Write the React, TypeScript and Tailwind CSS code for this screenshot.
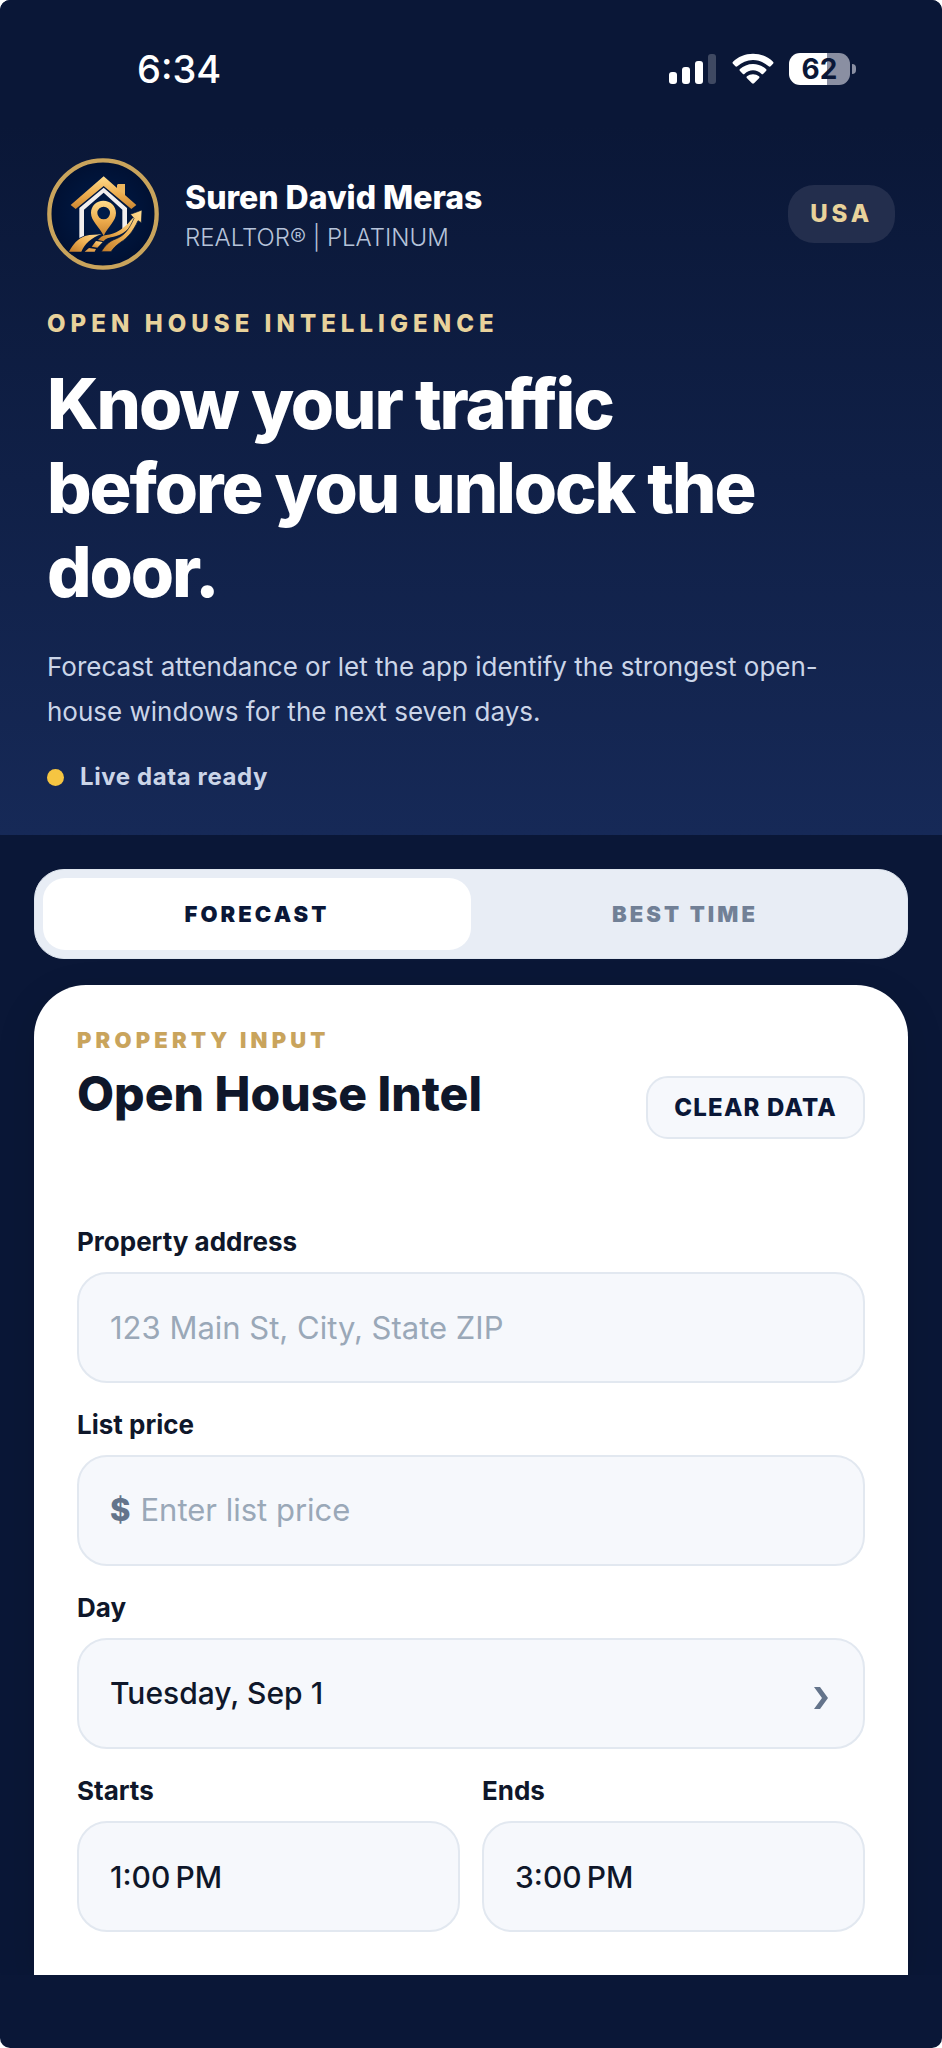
import React, { useState } from 'react'
import clsx from 'clsx'

const SignalIcon = () => (
  <svg width="48" height="32" viewBox="0 0 48 32" aria-hidden="true">
    <rect x="0" y="19" width="8" height="12" rx="3" fill="#fff" />
    <rect x="13" y="14" width="8" height="17" rx="3" fill="#fff" />
    <rect x="26" y="8" width="8" height="23" rx="3" fill="#fff" />
    <rect x="39" y="1" width="8" height="30" rx="3" fill="#fff" fillOpacity="0.22" />
  </svg>
)

const WifiIcon = () => (
  <svg width="42" height="32" viewBox="0 0 126 96" fill="#fff" aria-hidden="true">
    <path d="M63 2C39 2 18 11 3 26c-2 2-2 4 0 6l7 8c2 2 4 2 6 0 13-12 29-19 47-19s34 7 47 19c2 2 4 2 6 0l7-8c2-2 2-4 0-6C108 11 87 2 63 2Z" />
    <path d="M63 33c-15 0-29 6-39 15-2 2-2 4 0 6l8 8c2 2 4 2 6 0 7-6 15-10 25-10s18 4 25 10c2 2 4 2 6 0l8-8c2-2 2-4 0-6-10-9-24-15-39-15Z" />
    <path d="M63 64c-7 0-13 2-18 6-2 2-2 4 0 6l15 15c2 2 4 2 6 0l15-15c2-2 2-4 0-6-5-4-11-6-18-6Z" />
  </svg>
)

const Logo = () => (
  <svg className="size-28 shrink-0" viewBox="51 39 336 336" role="img" aria-label="Logo">
    <defs>
      <radialGradient id="disc">
        <stop offset="0" stopColor="#001c4a" />
        <stop offset="1" stopColor="#001032" />
      </radialGradient>
      <linearGradient id="gold" x1="0" y1="0" x2="0" y2="1">
        <stop offset="0" stopColor="#ffdc8c" />
        <stop offset="0.6" stopColor="#eba94a" />
        <stop offset="1" stopColor="#c98532" />
      </linearGradient>
      <linearGradient id="road" x1="0" y1="1" x2="1" y2="0">
        <stop offset="0" stopColor="#c07a28" />
        <stop offset="0.5" stopColor="#f0b255" />
        <stop offset="1" stopColor="#ffdd93" />
      </linearGradient>
    </defs>
    <circle cx="219" cy="207" r="161" fill="url(#disc)" stroke="#c9a45c" strokeWidth="13" />
    <path d="M148 279V189l73-61 70 61v56l-14 11v-62l-56-51-59 51v78Z" fill="#f1eeee" />
    <path d="M261 133v-13l3-3h21v42l-24-20Z" fill="#eeb65d" />
    <path d="M221 94 122 180l15 12 84-69 83 69 15-12Z" fill="url(#gold)" />
    <path
      d="M220 167c-21 0-37 16-37 37 0 24 25 41 38 68 13-27 37-44 37-68 0-21-17-37-38-37Zm1 18a19 19 0 1 1 0 38 19 19 0 0 1 0-38Z"
      fill="url(#gold)"
      fillRule="evenodd"
    />
    <path d="M117 320c12-22 26-39 48-47 18-6 35-3 50-6-32 12-50 28-61 53Z" fill="url(#road)" />
    <path d="M204 285c6-8 15-14 25-15 28-4 52-18 72-43l11-12 6 6c-17 29-39 49-70 55-16 3-20 4-27 13Z" fill="url(#road)" />
    <path d="m198 288 20 3-16 17-17-3Z" fill="url(#road)" />
    <path d="m177 309 21 3-4 8h-30Z" fill="#e3a14a" />
    <path
      d="M214 320c10-16 21-30 43-38 27-10 41-31 55-62l-11-12 35-13-2 38-10-6c-15 33-31 51-51 64-15 10-23 19-30 29Z"
      fill="url(#road)"
      stroke="#001437"
      strokeWidth="2"
    />
  </svg>
)

const StatusBar = () => (
  <div className="flex h-[138px] items-center justify-between pr-[39px] pl-[90px] text-white">
    <span className="text-[38px] leading-[44px] font-medium">6:34</span>
    <div className="flex items-center gap-[15px]">
      <SignalIcon />
      <WifiIcon />
      <div className="flex items-center gap-[2px]">
        <div className="flex h-8 w-[61px] items-center justify-center rounded-[11px] bg-[linear-gradient(to_right,#ffffff_62%,#8a8fa2_62%)] text-[28px] leading-8 font-bold text-[#0a1737]">
          62
        </div>
        <div className="h-[10px] w-1 rounded-r-full bg-[#8a8fa2]" />
      </div>
    </div>
  </div>
)

const fieldBox =
  "h-[111px] w-full rounded-[30px] border-2 border-[#e2e8f0] bg-[#f6f8fc] px-[31px] text-[#0f172a] outline-none"

type FieldProps = {
  id: string
  label: string
  children: React.ReactNode
}

const Field = ({ id, label, children }: FieldProps) => (
  <div className="flex min-w-0 flex-col gap-[13px]">
    <label htmlFor={id} className="text-[26px] leading-[34px] font-bold text-[#0f172a]">
      {label}
    </label>
    {children}
  </div>
)

const tabs = [
  { id: "forecast", label: "FORECAST" },
  { id: "best", label: "BEST TIME" },
]

const App = () => {
  const [tab, setTab] = useState("forecast")
  const [address, setAddress] = useState("")
  const [price, setPrice] = useState("")
  const [starts, setStarts] = useState("1:00\u202fPM")
  const [ends, setEnds] = useState("3:00\u202fPM")

  const clearData = () => {
    setAddress("")
    setPrice("")
  }

  return (
    <div className="bg-white font-['Inter',sans-serif]">
      <div className="flex min-h-screen flex-col overflow-hidden rounded-[10px] bg-[#0a1737]">
        <header className="bg-[linear-gradient(to_bottom,#0a1737_0%,#0a1737_15%,#162957_100%)] px-[47px] pb-[42px]">
          <StatusBar />

          <div className="flex items-center justify-between gap-4 pt-5">
            <div className="flex min-w-0 items-center gap-[26px]">
              <Logo />
              <div className="pt-1">
                <div className="text-[32px] leading-10 font-extrabold text-white">Suren David Meras</div>
                <div className="mt-1 text-[24px] leading-8 font-light text-[#b6c3da]">REALTOR® | PLATINUM</div>
              </div>
            </div>
            <span className="rounded-[26px] bg-[#232e4d] px-[22px] py-[13px] text-[24px] leading-8 font-extrabold tracking-[0.16em] text-[#e8d29b]">
              USA
            </span>
          </div>

          <p className="mt-[38px] text-[24px] leading-8 font-extrabold tracking-[0.21em] text-[#e8d29b]">
            OPEN HOUSE INTELLIGENCE
          </p>
          <h1 className="mt-[22px] max-w-[760px] text-[70px] leading-[84px] font-extrabold tracking-[-0.03em] text-white">
            Know your traffic before you unlock the door.
          </h1>
          <p className="mt-[30px] max-w-[800px] text-[26px] leading-[45px] text-[#cbd5e8]">
            Forecast attendance or let the app identify the strongest open-house windows for the next seven days.
          </p>
          <div className="mt-[27px] flex items-center gap-4">
            <span className="size-[17px] rounded-full bg-[#f5c542]" />
            <span className="text-[24px] leading-8 font-bold tracking-wide text-[#cbd5e8]">Live data ready</span>
          </div>
        </header>

        <main className="overflow-hidden px-[34px] pt-[34px]">
          <div role="tablist" className="flex h-[90px] rounded-[30px] border border-[#dfe6ef] bg-[#e8edf5] p-2">
            {tabs.map((t) => (
              <button
                key={t.id}
                type="button"
                role="tab"
                aria-selected={tab === t.id}
                onClick={() => setTab(t.id)}
                className={clsx(
                  "flex-1 rounded-[22px] text-[22px] leading-7 font-black tracking-[0.14em]",
                  tab === t.id ? "bg-white text-[#0a1737]" : "text-[#718096]"
                )}
              >
                {t.label}
              </button>
            ))}
          </div>

          <section className="mt-[26px] rounded-t-[52px] bg-white px-[43px] pt-[41px] pb-[43px] shadow-[0_12px_40px_rgba(0,0,0,0.12)]">
            <div className="flex items-end justify-between gap-4">
              <div className="pb-4">
                <p className="text-[22px] leading-7 font-black tracking-[0.19em] text-[#c9a45c]">PROPERTY INPUT</p>
                <h2 className="mt-[11px] text-[48px] leading-[58px] font-extrabold text-[#0f172a]">
                  Open House Intel
                </h2>
              </div>
              <button
                type="button"
                onClick={clearData}
                className="h-[63px] rounded-[22px] border-2 border-[#e2e8f0] bg-[#f6f8fc] px-[26px] text-[24px] leading-8 font-extrabold tracking-wider text-[#0a1737]"
              >
                CLEAR DATA
              </button>
            </div>

            <form className="mt-[86px] flex flex-col gap-[25px]" onSubmit={(e) => e.preventDefault()}>
              <Field id="address" label="Property address">
                <input
                  id="address"
                  value={address}
                  onChange={(e) => setAddress(e.target.value)}
                  placeholder="123 Main St, City, State ZIP"
                  className={clsx(fieldBox, "text-[31px] placeholder:text-[#9aa8b8]")}
                />
              </Field>

              <Field id="price" label="List price">
                <div className={clsx(fieldBox, "flex items-center gap-[10px] text-[31px]")}>
                  <span className="font-extrabold text-[#64748b]">$</span>
                  <input
                    id="price"
                    inputMode="numeric"
                    value={price}
                    onChange={(e) => setPrice(e.target.value)}
                    placeholder="Enter list price"
                    className="min-w-0 flex-1 bg-transparent outline-none placeholder:text-[#9aa8b8]"
                  />
                </div>
              </Field>

              <Field id="day" label="Day">
                <div className="relative">
                  <select id="day" className={clsx(fieldBox, "block appearance-none text-[30px] font-medium")}>
                    <option>Tuesday, Sep 1</option>
                    <option>Wednesday, Sep 2</option>
                    <option>Thursday, Sep 3</option>
                  </select>
                  <svg
                    className="pointer-events-none absolute top-12 right-9"
                    width="16"
                    height="26"
                    viewBox="0 0 16 26"
                    fill="#64748b"
                    aria-hidden="true"
                  >
                    <path d="M1 1h6l8 11-8 11H1l8-11Z" />
                  </svg>
                </div>
              </Field>

              <div className="grid grid-cols-2 gap-[22px]">
                <Field id="starts" label="Starts">
                  <input
                    id="starts"
                    value={starts}
                    onChange={(e) => setStarts(e.target.value)}
                    className={clsx(fieldBox, "text-[30px] font-medium")}
                  />
                </Field>
                <Field id="ends" label="Ends">
                  <input
                    id="ends"
                    value={ends}
                    onChange={(e) => setEnds(e.target.value)}
                    className={clsx(fieldBox, "text-[30px] font-medium")}
                  />
                </Field>
              </div>
            </form>
          </section>
        </main>
      </div>
    </div>
  )
}

export default App
